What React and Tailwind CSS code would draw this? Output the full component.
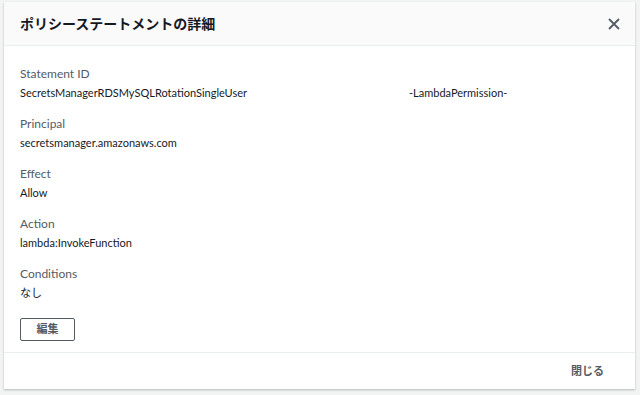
import React from "react";

const font = { fontFamily: 'Lato, "Noto Sans CJK JP", sans-serif' };

const rows = [
  { label: "Principal", value: "secretsmanager.amazonaws.com" },
  { label: "Effect", value: "Allow" },
  { label: "Action", value: "lambda:InvokeFunction" },
  { label: "Conditions", value: "なし" },
];

function Field({ label, children }) {
  return (
    <div className="mb-[13px]">
      <div className="text-[12px] leading-[18px] text-[#545b64]">{label}</div>
      <div className="mt-[1px] text-[11px] leading-[18px] text-[#16191f]">{children}</div>
    </div>
  );
}

export default function App() {
  return (
    <div
      className="h-[395px] w-[640px] overflow-hidden bg-[#f2f3f3] pt-[2px] pr-[5px] pb-[6px] pl-[4px]"
      style={font}
    >
      <div className="flex h-full flex-col bg-white shadow-[0_1px_2px_rgba(0,0,0,0.25)]">
        <div className="flex h-[44px] items-center justify-between border-b border-[#eaeded] bg-[#fafafa] pr-[15px] pl-[16px]">
          <h2 className="text-[14px] font-bold text-[#16191f]">ポリシーステートメントの詳細</h2>
          <svg width="12" height="12" viewBox="0 0 12 12" className="text-[#545b64]">
            <path d="M1 1l10 10M11 1L1 11" stroke="currentColor" strokeWidth="1.8" fill="none" />
          </svg>
        </div>

        <div className="flex-1 px-[16px] pt-[19px]">
          <Field label="Statement ID">
            <span>SecretsManagerRDSMySQLRotationSingleUser</span>
            <span className="inline-block w-[162px]" />
            <span>-LambdaPermission-</span>
          </Field>
          {rows.map((r) => (
            <Field key={r.label} label={r.label}>
              {r.value}
            </Field>
          ))}
          <button className="mt-[2px] h-[23px] w-[55px] rounded-[2px] border border-[#545b64] text-[11px] font-bold text-[#545b64]">
            編集
          </button>
        </div>

        <div className="flex h-[37px] items-center justify-end border-t border-[#eaeded] pr-[31px]">
          <span className="text-[11px] font-bold text-[#545b64]">閉じる</span>
        </div>
      </div>
    </div>
  );
}
